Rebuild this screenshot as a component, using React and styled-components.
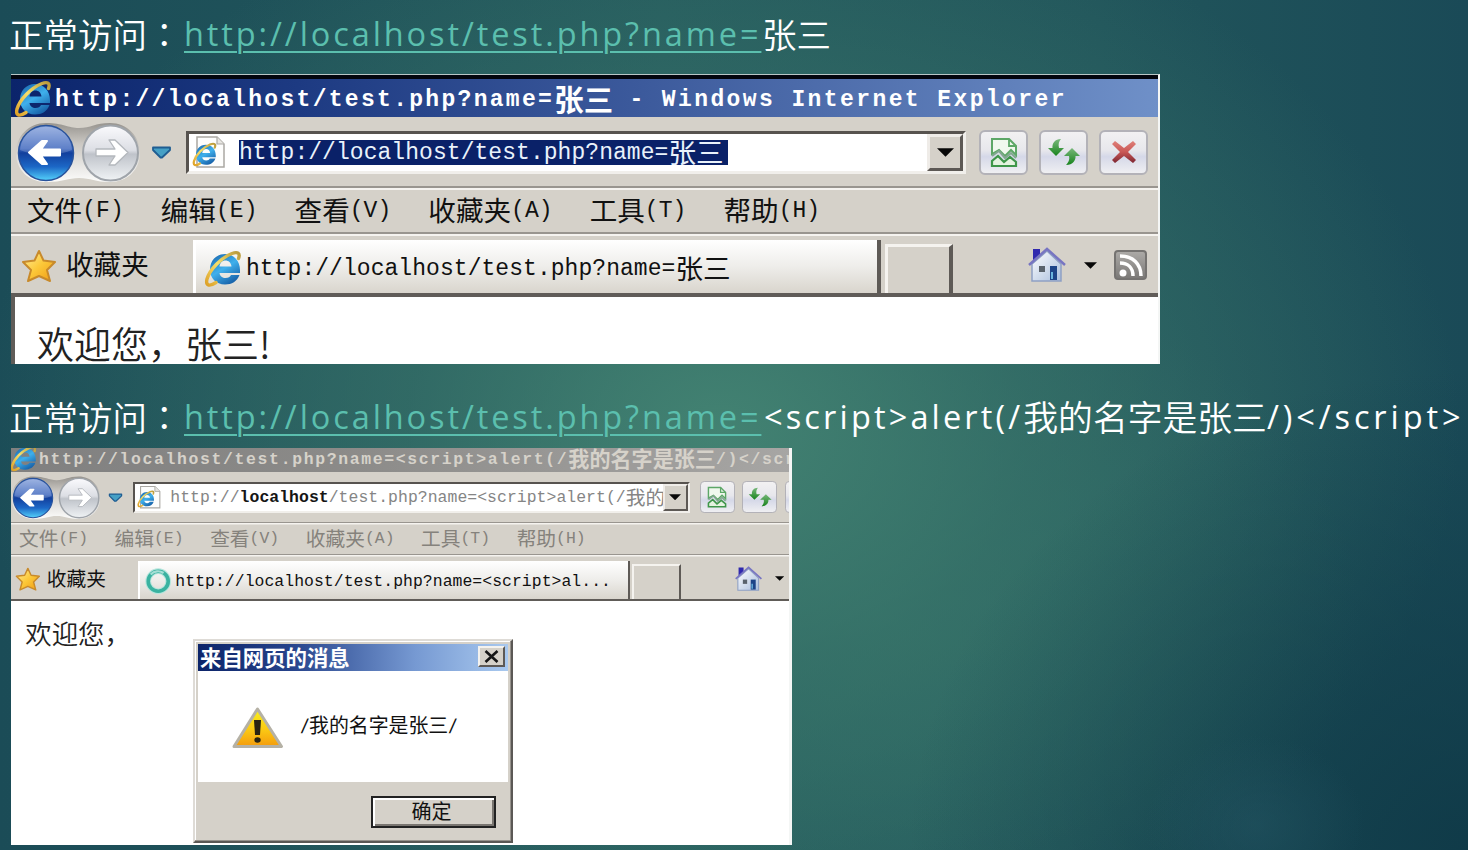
import React from "react";
import styled, { createGlobalStyle, css } from "styled-components";

const u = (n) => `calc(var(--u) * ${n})`;

const GlobalStyle = createGlobalStyle`
  * { box-sizing: border-box; }
  body { margin: 0; overflow: hidden; }
  svg { display: block; flex: none; }
`;

const HAN = `"Noto Sans CJK SC", sans-serif`;

const Slide = styled.main`
  width: 1468px;
  height: 850px;
  overflow: hidden;
  padding-left: 11px;
  background:
    radial-gradient(ellipse 110px 90px at 1255px 825px, rgba(38, 88, 102, 0.45), rgba(38, 88, 102, 0) 100%),
    radial-gradient(ellipse 560px 480px at 1468px 850px, rgba(14, 56, 70, 0.85), rgba(14, 56, 70, 0) 100%),
    radial-gradient(ellipse 740px 560px at 720px 430px, rgba(68, 132, 115, 0.95), rgba(60, 120, 108, 0.6) 42%, rgba(50, 105, 100, 0) 100%),
    radial-gradient(ellipse 480px 360px at 880px 620px, rgba(52, 116, 104, 0.6), rgba(48, 110, 104, 0) 100%),
    linear-gradient(90deg, #1b4c57 0%, #245a5d 45%, #21555b 75%, #1a4a57 100%);
`;

const Caption = styled.h2`
  display: flex;
  align-items: center;
  margin: 0 0 0 -2px;
  height: ${(p) => p.$height}px;
  padding: ${(p) => p.$top}px 0 ${(p) => p.$bottom || 0}px;
  font: 400 32.5px/40px "Open Sans", "Noto Sans CJK TC", sans-serif;
  color: #fff;
  white-space: nowrap;
`;
const CaptionHan = styled.span`
  margin-top: -3px;
  font-family: ${(p) => (p.$centred ? `"Noto Sans CJK TC"` : `"Noto Sans CJK SC"`)}, sans-serif;
  font-size: ${(p) => p.$size || 34.5}px;
  font-weight: 350;
`;
const CaptionLink = styled.a`
  width: 578px;
  margin: -1px 0 0 2.5px;
  color: #5bbfae;
  letter-spacing: 2.9px;
  text-decoration: underline;
  text-decoration-thickness: 2px;
  text-underline-offset: 5px;
`;
const CaptionCode = styled.span`
  margin: -1px 0 0 ${(p) => p.$left || 0}px;
  letter-spacing: ${(p) => p.$spacing}px;
`;

const Window = styled.section`
  --u: ${(p) => p.$unit}px;
  position: relative;
  width: ${(p) => p.$width}px;
  height: ${(p) => p.$height}px;
  overflow: hidden;
  background: #fff;
  border-top: ${(p) => p.$rim || 0}px solid #b9c6c6;
  border-right: ${(p) => p.$edge}px solid #f4f6f5;
`;
const Chrome = styled.div`
  width: ${(p) => p.$width};
  margin: ${(p) => p.$shiftY} 0 0 ${(p) => p.$shiftX};
  background: #d5d1c9;
  display: flow-root;
`;

const Mono = styled.span`
  margin-top: ${u(3)};
  font-family: "Liberation Mono", monospace;
  font-size: ${u(23)};
  letter-spacing: ${(p) => u(p.$spacing || 0.05)};
  white-space: pre;
`;
const Han = styled.span`
  font-family: ${HAN};
  font-size: ${(p) => u(p.$size || 27.6)};
  white-space: pre;
`;

const TitleBar = styled.header`
  display: flex;
  align-items: center;
  height: ${u(43)};
  padding: ${u(1)} 0 0 ${u(3)};
  border-top: ${u(5)} solid #03050e;
  background: ${(p) => (p.$active ? "linear-gradient(90deg, #0b246b 0%, #1d3a82 25%, #3c5a9c 55%, #6f90c8 100%)" : "linear-gradient(90deg, #808080, #8b8a88 40%, #a9a8a6)")};
  color: ${(p) => (p.$active ? "#fff" : "#d6d2ca")};
  font-weight: 700;
  line-height: 1;
  > svg { margin-top: ${u(-1)}; }
`;
const TitleText = styled.div`
  display: flex;
  align-items: center;
  margin-left: ${u(4)};
  white-space: pre;
`;

const ToolBar = styled.div`
  display: flex;
  align-items: center;
  height: ${u(69)};
  padding-top: ${u(1)};
`;
const AddressBox = styled.div`
  display: flex;
  width: ${u(780)};
  height: ${u(43)};
  margin: 0 ${u(13)} 0 ${u(14)};
  border: ${u(3)} solid #57534f;
  border-right-color: #f1efeb;
  border-bottom-color: #f1efeb;
  background: #fff;
`;
const AddressText = styled.div`
  flex: 1;
  min-width: 0;
  display: flex;
  align-items: center;
  overflow-x: clip;
  padding-left: ${u(3)};
  color: #858585;
  line-height: 1;
  b { color: #151515; font-weight: 700; }
  > svg { margin-right: ${u(13)}; }
`;
const Selection = styled.div`
  display: flex;
  align-items: center;
  height: ${u(25)};
  padding-right: ${u(4)};
  background: #0a2168;
  color: #e9f2fb;
`;
const DropButton = styled.div`
  display: grid;
  place-items: center;
  flex: none;
  width: ${u(36)};
  border: ${u(3)} solid #efece8;
  border-right-color: #5d5955;
  border-bottom-color: #5d5955;
  background: #d5d1c9;
`;
const ToolButtons = styled.div`
  display: flex;
  gap: ${u(11)};
`;
const ToolButton = styled.div`
  display: grid;
  place-items: center;
  width: ${u(49)};
  height: ${u(45)};
  border: ${u(2)} solid #b3b2b8;
  border-radius: ${u(6)};
  background: linear-gradient(#f2f1f2, #e7e7ec 45%, #d5d8e8 60%, #efeff2);
`;

const grooveTop = css`
  border-top: ${u(2)} solid #99958f;
  box-shadow: inset 0 ${u(2)} 0 #f5f3ef;
`;
const MenuBar = styled.nav`
  ${grooveTop}
  display: flex;
  align-items: center;
  gap: ${u(37)};
  height: ${u(46)};
  padding: 0 0 ${u(1)} ${u(16)};
  color: ${(p) => (p.$active ? "#111" : "#85827c")};
  line-height: 1;
`;
const MenuItem = styled.div`
  display: flex;
  align-items: center;
`;

const TabRow = styled.div`
  ${grooveTop}
  display: flex;
  align-items: flex-end;
  height: ${u(65)};
  border-bottom: ${u(4)} solid #605c58;
  line-height: 1;
  color: #111;
`;
const Favorites = styled.div`
  display: flex;
  align-items: center;
  gap: ${u(9)};
  width: ${u(182)};
  height: ${u(54)};
  padding: 0 0 ${u(1)} ${u(10)};
  > span { margin-top: ${u(-3)}; }
`;
const Tab = styled.div`
  display: flex;
  align-items: center;
  gap: ${u(5)};
  width: ${u(688)};
  height: ${u(53)};
  padding: ${u(3)} 0 0 ${u(8)};
  border-left: ${u(3)} solid #fff;
  border-right: ${u(4)} solid #5e5a56;
  background: linear-gradient(#fff, #eeedea 50%, #d9d5cd);
`;
const TabLabel = styled.div`
  display: flex;
  align-items: center;
`;
const NewTab = styled.div`
  width: ${u(68)};
  height: ${u(49)};
  margin-left: ${u(4)};
  border: ${u(3)} solid #f5f3ef;
  border-right: ${u(4)} solid #5e5a56;
  border-bottom: 0;
`;
const TabTools = styled.div`
  display: flex;
  align-items: center;
  height: ${u(56)};
  margin-left: ${u(75)};
`;
const Gap = styled.span`
  flex: none;
  width: ${(p) => u(p.$w)};
`;

const Content = styled.div`
  height: ${u(340)};
  padding: ${u(26)} 0 0 ${u(22)};
  border-left: ${u(4)} solid #605c58;
  background: #fff;
  color: #222;
  line-height: ${u(40)};
`;
const Welcome = styled(Han)`
  font-weight: 350;
`;

const Dialog = styled.div`
  position: absolute;
  left: 182px;
  top: 191px;
  width: 320px;
  height: 204px;
  padding: 3px;
  border: 2px solid;
  border-color: #dedbd6 #5b5855 #5b5855 #dedbd6;
  background: #d5d1c9;
  box-shadow: inset -1px -1px 0 #96928c, inset 1px 1px 0 #fff;
`;
const DialogTitle = styled.div`
  display: flex;
  align-items: center;
  justify-content: space-between;
  height: 27px;
  padding: 0 3px 2px 2px;
  background: linear-gradient(90deg, #0c2469, #26438b 30%, #7699d2 70%, #a9c9ef);
  color: #fff;
  font: 700 21.4px/1 ${HAN};
`;
const CloseButton = styled.div`
  display: grid;
  place-items: center;
  width: 27px;
  height: 21px;
  border: 2px solid #f4f2ee;
  border-right-color: #5d5955;
  border-bottom-color: #5d5955;
  background: #d5d1c9;
`;
const DialogBody = styled.div`
  display: flex;
  align-items: center;
  gap: 16px;
  height: 111px;
  padding: 2px 0 0 34px;
  background: #fff;
  color: #111;
  font: 400 19.9px/1 "Liberation Sans", ${HAN};
`;
const Slash = styled.span`
  display: inline-block;
  width: 9px;
  text-align: center;
  transform: skewX(-10deg);
`;
const DialogMessage = styled.div`
  padding-bottom: 2px;
  white-space: nowrap;
`;
const DialogFooter = styled.div`
  display: flex;
  justify-content: flex-end;
  padding: 14px 12px 0 0;
`;
const OkButton = styled.button`
  width: 125px;
  height: 32px;
  padding: 0 4px 3px 0;
  border: 2px solid #222;
  border-radius: 0;
  background: #d5d1c9;
  box-shadow: inset 2px 2px 0 #fff, inset -2px -2px 0 #797570;
  color: #111;
  font: 400 20px/1 ${HAN};
`;

const Sized = styled.svg`
  width: ${(p) => u(p.$w)};
  height: ${(p) => u(p.$h)};
`;

const Defs = () => (
  <svg width="0" height="0" style={{ position: "absolute" }}>
    <defs>
      <linearGradient id="ie" x1="0" y1="0" x2=".6" y2="1">
        <stop offset="0" stopColor="#1761a8" />
        <stop offset=".55" stopColor="#3fb0ec" />
        <stop offset="1" stopColor="#1a66ad" />
      </linearGradient>
      <linearGradient id="gold" x1="0" y1="1" x2="1" y2="0">
        <stop offset="0" stopColor="#dda128" />
        <stop offset=".5" stopColor="#f6df6c" />
        <stop offset="1" stopColor="#b99a3a" />
      </linearGradient>
      <linearGradient id="back" x1="0" y1="0" x2="0" y2="1">
        <stop offset="0" stopColor="#8aa5dc" />
        <stop offset=".42" stopColor="#3c65bd" />
        <stop offset=".5" stopColor="#123f9d" />
        <stop offset=".75" stopColor="#1c67c6" />
        <stop offset="1" stopColor="#54d2fb" />
      </linearGradient>
      <linearGradient id="forward" x1="0" y1="0" x2="0" y2="1">
        <stop offset="0" stopColor="#fafafd" />
        <stop offset=".45" stopColor="#dcdee4" />
        <stop offset=".52" stopColor="#bfc3ca" />
        <stop offset="1" stopColor="#f0f3f5" />
      </linearGradient>
      <linearGradient id="cradle" x1="0" y1="0" x2="0" y2="1">
        <stop offset="0" stopColor="#97948f" />
        <stop offset=".35" stopColor="#cbc8c3" />
        <stop offset="1" stopColor="#fcfcfb" />
      </linearGradient>
      <linearGradient id="star" x1="0" y1="0" x2="1" y2="1">
        <stop offset="0" stopColor="#fff0a0" />
        <stop offset=".5" stopColor="#fcc93a" />
        <stop offset="1" stopColor="#f09a12" />
      </linearGradient>
      <linearGradient id="green" x1="0" y1="0" x2="0" y2="1">
        <stop offset="0" stopColor="#79b87b" />
        <stop offset="1" stopColor="#17831c" />
      </linearGradient>
      <linearGradient id="red" x1="0" y1="0" x2="0" y2="1">
        <stop offset="0" stopColor="#df8079" />
        <stop offset=".5" stopColor="#c95755" />
        <stop offset="1" stopColor="#7c2632" />
      </linearGradient>
      <linearGradient id="wall" x1="0" y1="0" x2="1" y2="1">
        <stop offset="0" stopColor="#fff" />
        <stop offset="1" stopColor="#a9bedd" />
      </linearGradient>
      <linearGradient id="warn" x1="0" y1="0" x2="0" y2="1">
        <stop offset="0" stopColor="#f6f01e" />
        <stop offset=".55" stopColor="#fbc914" />
        <stop offset="1" stopColor="#f49b0c" />
      </linearGradient>
      <linearGradient id="rss" x1="0" y1="0" x2="0" y2="1">
        <stop offset="0" stopColor="#adaba8" />
        <stop offset="1" stopColor="#7a7876" />
      </linearGradient>
    </defs>
  </svg>
);

const IeArt = () => (
  <>
    <path
      fillRule="evenodd"
      d="M21 4C30 4 36 11 36 20V23H15.500C16 26.500 18.500 28 21.500 28C24.500 28 26 27 27 25H35.500C33 31.500 28 34.500 21 34.500C12 34.500 6 28 6 19.500C6 11 12 4 21 4ZM15.500 16.500H27.500C27 12.500 24.500 10.500 21.500 10.500C18.500 10.500 16 12.500 15.500 16.500Z"
      fill="url(#ie)"
    />
    <path d="M12 32.500C5 37 1.500 35.500 3 29C6 19 17 8 28 3.500C33.500 1.500 36.500 3 34.500 8.500" fill="none" stroke="url(#gold)" strokeWidth="3.400" strokeLinecap="round" />
  </>
);
const IeIcon = ({ size = 37 }) => (
  <Sized $w={size} $h={size} viewBox="0 0 37 37"><IeArt /></Sized>
);
const PageIcon = () => (
  <Sized $w={34} $h={34} viewBox="0 0 34 34">
    <path d="M5 2H25L32 9V32H5Z" fill="#fdfdfc" stroke="#aaa8a3" strokeWidth="1.500" />
    <path d="M25 2V9H32" fill="#e8e6e2" stroke="#aaa8a3" strokeWidth="1.200" />
    <g transform="translate(0 7) scale(.66)"><IeArt /></g>
  </Sized>
);
const NavButtons = () => (
  <Sized $w={134} $h={69} viewBox="0 0 134 69">
    <path d="M35 5C52 5 57 10 68 10C80 10 84 5 99 5C116 5 129 18 129 35C129 52 116 64 99 64C84 64 80 60 68 60C57 60 52 64 35 64C18 64 5 52 5 35C5 18 18 5 35 5Z" fill="url(#cradle)" />
    <circle cx="35" cy="35" r="27.500" fill="url(#back)" stroke="#28529b" strokeWidth="1.500" />
    <path d="M9 32C11 15 23 9 35 9C47 9 59 15 61 32C48 38 22 38 9 32Z" fill="#fff" opacity=".18" />
    <path d="M18 34.500L31 23H36L30 31.500H49V37.500H30L36 46H31Z" fill="#fff" stroke="#fff" strokeWidth="2" strokeLinejoin="round" />
    <circle cx="99.500" cy="35" r="27.500" fill="url(#forward)" stroke="#9fa4aa" strokeWidth="2" />
    <path d="M117 34.500L104 22H98L104 31H85V38H104L98 47H104Z" fill="#fff" stroke="#b4b8bd" strokeWidth="1.300" strokeLinejoin="round" />
  </Sized>
);
const HistoryArrow = () => (
  <Sized $w={21} $h={13} viewBox="0 0 21 13">
    <path d="M2 1.500H19V4L11 11.500H9.500L2 4Z" fill="#46a0c5" stroke="#1f5d92" strokeWidth="1.800" strokeLinejoin="round" />
  </Sized>
);
const DownArrow = ({ w = 17, h = 9 }) => (
  <Sized $w={w} $h={h} viewBox="0 0 16 8"><path d="M0 0H16L8 8Z" fill="#080808" /></Sized>
);
const BrokenPageIcon = () => (
  <Sized $w={28} $h={31} viewBox="0 0 28 31">
    <path d="M2 17V2H19L26 9V18L21 13L15 19L9 13Z" fill="#f0f8ee" stroke="#5da767" strokeWidth="2" />
    <path d="M19 2V9H26" fill="none" stroke="#5da767" strokeWidth="1.800" />
    <path d="M2 19L9 14L15 21L21 16L26 21" fill="none" stroke="#82a790" strokeWidth="2" />
    <path d="M2 29V24L8 19L14 25L20 20L26 25V29Z" fill="#e4f3e0" stroke="#3e964a" strokeWidth="2.200" />
  </Sized>
);
const RefreshIcon = () => (
  <Sized $w={34} $h={28} viewBox="0 0 34 28">
    <path d="M14 1C8 1 5 5 5.500 10H1L9 18L17 10H12C11 6 12 3 14 1Z" fill="url(#green)" />
    <path d="M19 27C26 27 29 22 28.500 18H33L25 10L17 18H22C23 22 21 25 19 27Z" fill="url(#green)" />
  </Sized>
);
const StopIcon = () => (
  <Sized $w={26} $h={24} viewBox="0 0 26 24">
    <path d="M4 1L13 8L22 1L25 4L17 12L25 20L22 23L13 16L4 23L1 20L9 12L1 4Z" fill="url(#red)" />
  </Sized>
);
const StarIcon = () => (
  <Sized $w={36} $h={34} viewBox="0 0 36 34">
    <path d="M18 2L22.500 11.500L34 13L26 21L29 32L18 27L7 32L10 21L2 13L13.500 11.500Z" fill="url(#star)" stroke="#c88a2b" strokeWidth="2" strokeLinejoin="round" />
  </Sized>
);
const HomeIcon = () => (
  <Sized $w={38} $h={36} viewBox="0 0 38 36">
    <path d="M5 2H12V8L5 14Z" fill="#3029ae" />
    <path d="M4 17L19 4L33 17V34H4Z" fill="url(#wall)" stroke="#8ea0c4" strokeWidth="1.500" />
    <path d="M1 18L19 2L37 18" fill="none" stroke="#7775c2" strokeWidth="2.500" />
    <path d="M11 19H17V25H11Z" fill="#59626c" />
    <path d="M22 19H29V33H22Z" fill="#1d4488" />
    <path d="M23 25H25V32H23Z" fill="#69b5de" />
  </Sized>
);
const RssIcon = () => (
  <Sized $w={33} $h={30} viewBox="0 0 33 30">
    <rect x="1" y="1" width="31" height="28" rx="3" fill="url(#rss)" stroke="#757371" strokeWidth="2" />
    <circle cx="9" cy="23" r="3.500" fill="#fff" />
    <path d="M6 13C14 13 19 18 19 26M6 6C19 6 27 14 27 26" fill="none" stroke="#fff" strokeWidth="3.500" />
  </Sized>
);
const LoadingRing = () => (
  <Sized $w={37} $h={37} viewBox="0 0 37 37">
    <circle cx="18.500" cy="18.500" r="14" fill="none" stroke="#b5e5dc" strokeWidth="8" />
    <circle cx="18.500" cy="18.500" r="14" fill="none" stroke="#3ab2a0" strokeWidth="5" />
    <path d="M8 9A14 14 0 0 1 26 7" fill="none" stroke="#a5dfd5" strokeWidth="3" />
  </Sized>
);
const WarningIcon = () => (
  <svg width="52" height="42" viewBox="0 0 52 42">
    <path d="M25.500 2L49.500 39.500H2Z" fill="url(#warn)" stroke="#b5b1a5" strokeWidth="3" strokeLinejoin="round" />
    <path d="M22 13H29L28 28H23Z" fill="#292413" />
    <ellipse cx="25.500" cy="33" rx="3.200" ry="2.700" fill="#292413" />
  </svg>
);

const MENUS = [["文件", "(F)"], ["编辑", "(E)"], ["查看", "(V)"], ["收藏夹", "(A)"], ["工具", "(T)"], ["帮助", "(H)"]];
const URL_BASE = "http://localhost/test.php?name=";

const Browser = ({ active, title, address, tabIcon, tab, children }) => (
  <>
    <TitleBar $active={active}>
      <IeIcon />
      <TitleText>{title}</TitleText>
    </TitleBar>
    <ToolBar>
      <NavButtons />
      <Gap $w={6} />
      <HistoryArrow />
      <AddressBox>
        <AddressText><PageIcon />{address}</AddressText>
        <DropButton><DownArrow /></DropButton>
      </AddressBox>
      <ToolButtons>
        <ToolButton><BrokenPageIcon /></ToolButton>
        <ToolButton><RefreshIcon /></ToolButton>
        <ToolButton><StopIcon /></ToolButton>
      </ToolButtons>
    </ToolBar>
    <MenuBar $active={active}>
      {MENUS.map(([name, key]) => (
        <MenuItem key={name}><Han>{name}</Han><Mono>{key}</Mono></MenuItem>
      ))}
    </MenuBar>
    <TabRow>
      <Favorites><StarIcon /><Han>收藏夹</Han></Favorites>
      <Tab>{tabIcon}<TabLabel>{tab}</TabLabel></Tab>
      <NewTab />
      <TabTools>
        <HomeIcon /><Gap $w={18} /><DownArrow w={13} h={7} /><Gap $w={17} /><RssIcon />
      </TabTools>
    </TabRow>
    <Content>{children}</Content>
  </>
);

export default function App() {
  return (
    <Slide>
      <GlobalStyle />
      <Defs />
      <Caption $height={74} $top={0} $bottom={6}>
        <CaptionHan $centred>正常访问：</CaptionHan>
        <CaptionLink>{URL_BASE}</CaptionLink>
        <CaptionHan>张三</CaptionHan>
      </Caption>
      <Window $unit={1} $width={1149} $height={290} $edge={2} $rim={1}>
        <Chrome $width="1148px" $shiftX="0" $shiftY="-1px">
          <Browser
            active
            title={<><Mono $spacing={2.3}>{URL_BASE}</Mono><Han $size={29.5}>张三</Han><Mono $spacing={2.4}> - Windows Internet Explorer</Mono></>}
            address={<Selection><Mono>{URL_BASE}</Mono><Han>张三</Han></Selection>}
            tabIcon={<IeIcon />}
            tab={<><Mono>{URL_BASE}</Mono><Han>张三</Han></>}
          >
            <Welcome $size={37}>欢迎您，张三!</Welcome>
          </Browser>
        </Chrome>
      </Window>
      <Caption $height={84} $top={22}>
        <CaptionHan $centred>正常访问：</CaptionHan>
        <CaptionLink>{URL_BASE}</CaptionLink>
        <CaptionCode $left={2} $spacing={3.15}>{"<script>alert(/"}</CaptionCode>
        <CaptionHan $size={34.8}>我的名字是张三</CaptionHan>
        <CaptionCode $spacing={3.9}>{"/)</script>"}</CaptionCode>
      </Caption>
      <Window $unit={0.715} $width={781} $height={397} $edge={3}>
        <Chrome $width="821px" $shiftX="-3.5px" $shiftY="-6.5px">
          <Browser
            title={<><Mono $spacing={2.3}>{URL_BASE + "<script>alert(/"}</Mono><Han $size={29.5}>我的名字是张三</Han><Mono $spacing={2.3}>{"/)</script>"}</Mono></>}
            address={<><Mono>http://<b>localhost</b>{"/test.php?name=<script>alert(/"}</Mono><Han>我的</Han></>}
            tabIcon={<LoadingRing />}
            tab={<Mono>{URL_BASE + "<script>al..."}</Mono>}
          >
            <Welcome $size={37}>欢迎您，</Welcome>
          </Browser>
        </Chrome>
        <Dialog>
          <DialogTitle>
            来自网页的消息
            <CloseButton>
              <svg width="15" height="13" viewBox="0 0 15 13"><path d="M1.500 1L13.500 12M13.500 1L1.500 12" stroke="#151515" strokeWidth="2.600" /></svg>
            </CloseButton>
          </DialogTitle>
          <DialogBody>
            <WarningIcon />
            <DialogMessage><Slash>/</Slash>我的名字是张三<Slash>/</Slash></DialogMessage>
          </DialogBody>
          <DialogFooter><OkButton>确定</OkButton></DialogFooter>
        </Dialog>
      </Window>
    </Slide>
  );
}
